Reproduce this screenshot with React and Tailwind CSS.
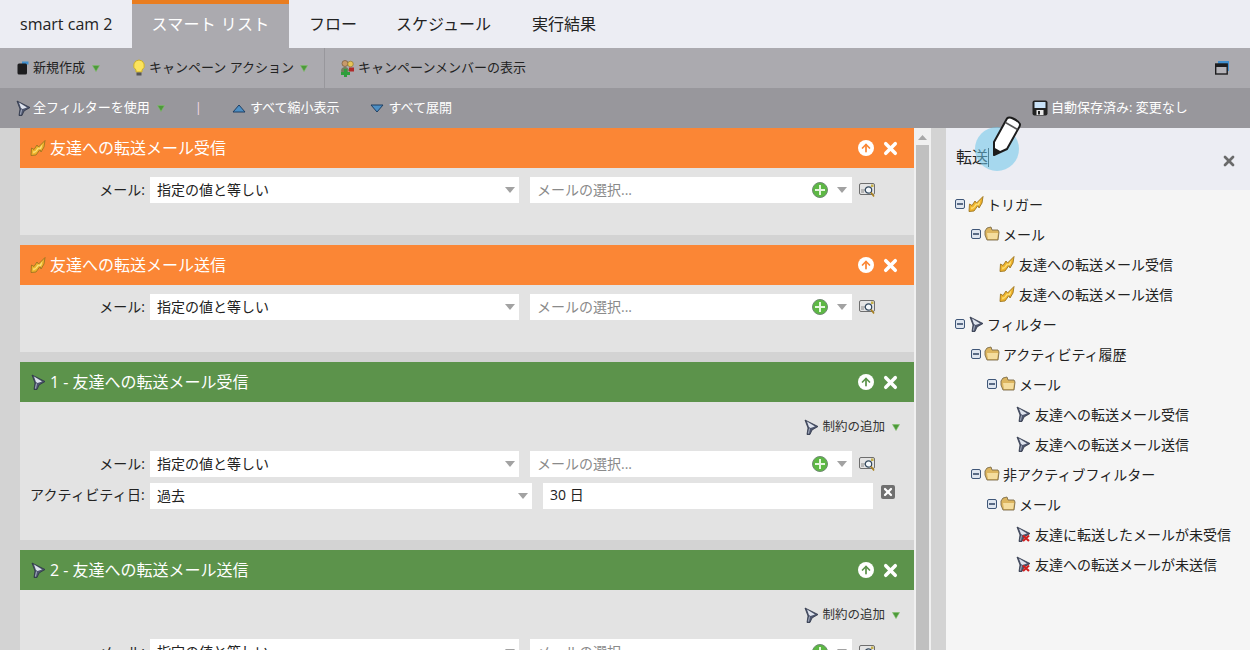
import { ArrowUp, X } from 'lucide-react';

const FONT = 'font-["Open_Sans","Noto_Sans_CJK_JP",sans-serif]';

function Tri({ className = '' }) {
  return (
    <svg viewBox="0 0 8 7" className={`w-[8px] h-[7px] shrink-0 ${className}`}>
      <path d="M0.500 0.500h7L4 6.500z" fill="#4d9a3a" stroke="#7fbf6a" strokeWidth="0.600" />
    </svg>
  );
}

function Bolt({ className = '' }) {
  return (
    <svg viewBox="0 0 16 16" className={`w-[16px] h-[16px] shrink-0 ${className}`}>
      <path d="M15 0.500L14 7l-3 5-1-2.500L6 15l-5 0.500L1.500 8 4 9.500 7 5l1.500 2z" fill="#f0b32c" stroke="#9c7520" strokeWidth="0.900" strokeLinejoin="round" />
      <path d="M3 13.500l0.500-2.500 1.500 0.500 3-4 1.500 0.500 3-4-1 4-1.500 2-1-1.500-3 3.500z" fill="#fbe27a" />
    </svg>
  );
}

function Funnel({ className = '', cross = false }) {
  return (
    <svg viewBox="0 0 16 16" className={`w-[16px] h-[16px] shrink-0 ${className}`}>
      <path d="M2 1l13 6.500-6 3.500-2 4.500H4L5 9z" fill="#4e566e" stroke="#2c3346" strokeWidth="0.800" strokeLinejoin="round" />
      <path d="M4 2.500l8 5-4.500 1.500L6 8z" fill="#dfe4ee" />
      <path d="M6.500 9.500L5.500 14.500" stroke="#aab2c4" strokeWidth="1" />
      {cross && <path d="M8 9.500l6 5.500M14 9.500l-6 5.500" stroke="#d01f1f" strokeWidth="2.200" />}
    </svg>
  );
}

function Folder() {
  return (
    <svg viewBox="0 0 16 16" className="w-[16px] h-[16px] shrink-0">
      <path d="M1 5l2-3 4-1 1 3h6l1 2-1 8H3L1 9z" fill="#dcb55f" stroke="#7d6c48" strokeWidth="0.900" strokeLinejoin="round" />
      <path d="M3 7h11l-1 6H4z" fill="#f5dd9e" />
    </svg>
  );
}

function Toggle() {
  return (
    <span className="w-[10px] h-[10px] shrink-0 rounded-[2px] border border-[#3f5678] bg-[#dfe6f0] flex items-center justify-center">
      <span className="w-[6px] h-[2px] bg-[#5a6b85]" />
    </span>
  );
}

function Plus() {
  return (
    <span className="w-[16px] h-[16px] shrink-0 rounded-full bg-[#5db844] border border-[#6f8a72] flex items-center justify-center relative">
      <span className="absolute w-[10px] h-[2px] bg-[#e6f6df]" />
      <span className="absolute w-[2px] h-[10px] bg-[#e6f6df]" />
    </span>
  );
}

function Mag() {
  return (
    <svg viewBox="0 0 17 15" className="w-[17px] h-[15px] shrink-0">
      <rect x="0.500" y="0.500" width="15" height="11" rx="1.500" fill="#e4e4e4" stroke="#6e6e6e" />
      <path d="M2 7h4M2 9h3" stroke="#8a8a8a" />
      <circle cx="9.500" cy="7" r="3.200" fill="#f4f8fb" stroke="#34495e" strokeWidth="1.200" />
      <path d="M12 9.500l3 4" stroke="#a9801e" strokeWidth="1.600" />
      <rect x="12" y="1.500" width="2.500" height="2.500" fill="#c5b04a" />
    </svg>
  );
}

function Select({ text, width, placeholder = false, extra = false }) {
  return (
    <div className={`h-[26px] ${width} bg-white flex items-center pl-[7px] ${extra ? 'pr-[5px]' : 'pr-[4px]'} shrink-0`}>
      <span className={`flex-1 pb-[2px] ${placeholder ? 'text-[#8a8a8a]' : 'text-[#222]'}`}>{text}</span>
      {extra && <Plus />}
      <svg viewBox="0 0 10 6" className={`w-[10px] h-[6px] ${extra ? 'ml-[9px]' : ''}`}>
        <path d="M0 0h10L5 6z" fill="#a2a2a2" />
      </svg>
    </div>
  );
}

function MailRow() {
  return (
    <div className="flex items-center">
      <div className="w-[125px] text-right text-[#222] mr-[5px] pb-[2px]">メール:</div>
      <Select text="指定の値と等しい" width="w-[369px]" />
      <div className="w-[11px]" />
      <Select text="メールの選択..." width="w-[322px]" placeholder extra />
      <div className="ml-[7px]"><Mag /></div>
    </div>
  );
}

function Card({ title, color, icon, filter = false, gapless = false }) {
  return (
    <div className={gapless ? '' : 'mb-[10px]'}>
      <div className={`h-[40px] ${color} flex items-center text-white text-[16px] pl-[10px] pr-[14px]`}>
        <span className="w-[20px] flex">{icon}</span>
        <span className="flex-1">{title}</span>
        <span className="w-[16px] h-[16px] rounded-full bg-white flex items-center justify-center">
          <ArrowUp size={12} strokeWidth={3.500} className={color === 'bg-[#fb8635]' ? 'text-[#fb8635]' : 'text-[#5c934b]'} />
        </span>
        <X size={19} strokeWidth={4.500} className="text-white ml-[7px]" />
      </div>
      {filter ? (
        <div className="h-[138px] bg-[#e3e3e3] text-[14px] pt-[13px]">
          <div className="h-[24px] flex items-center justify-end pr-[14px] text-[12.500px] text-[#333]">
            <Funnel className="mr-[3px]" />
            制約の追加
            <Tri className="ml-[7px]" />
          </div>
          <div className="mt-[12px]"><MailRow /></div>
          <div className="flex items-start mt-[6px]">
            <div className="w-[125px] text-right text-[#222] mr-[5px] leading-[24px] whitespace-nowrap tracking-[0.2px]">アクティビティ日:</div>
            <Select text="過去" width="w-[382px]" />
            <div className="w-[11px]" />
            <div className="w-[330px] h-[26px] bg-white pl-[7px] leading-[24px] text-[#222]">30 日</div>
            <span className="ml-[8px] mt-[2px] w-[14px] h-[14px] rounded-[2px] bg-[#707070] flex items-center justify-center">
              <X size={12} strokeWidth={4.500} className="text-white" />
            </span>
          </div>
        </div>
      ) : (
        <div className="h-[67px] bg-[#e3e3e3] text-[14px] pt-[9px]">
          <MailRow />
        </div>
      )}
    </div>
  );
}

function TreeRow({ pad, icon, text, toggle = true }) {
  return (
    <div className={`h-[30px] flex items-center ${pad}`}>
      {toggle && <Toggle />}
      <span className={toggle ? 'ml-[3px]' : ''}>{icon}</span>
      <span className={`${toggle ? 'ml-[3px]' : 'ml-[4px]'} text-[#222]`}>{text}</span>
    </div>
  );
}

export default function App() {
  return (
    <div className={`w-[1250px] h-[650px] overflow-hidden relative flex flex-col ${FONT} bg-[#d3d3d3]`}>
      {/* tabs */}
      <div className="h-[48px] bg-[#ecedf3] flex items-stretch text-[16px] text-[#222]">
        <div className="w-[132px] pl-[20px] flex items-center">smart cam 2</div>
        <div className="w-[157px] bg-[#abaaaf] border-t-4 border-[#e97d1f] text-white flex items-center justify-center pb-[4px] tracking-[0.3px]">スマート リスト</div>
        <div className="pl-[20px] flex items-center">フロー</div>
        <div className="pl-[39px] flex items-center">スケジュール</div>
        <div className="pl-[41px] flex items-center">実行結果</div>
      </div>

      {/* toolbar */}
      <div className="h-[40px] bg-[#abaaaf] flex items-center text-[13px] text-[#222] pl-[17px] pr-[21px]">
        <svg viewBox="0 0 12 14" className="w-[12px] h-[14px] mr-[4px] shrink-0">
          <rect x="5" y="0.500" width="6.500" height="3" fill="#3f8fd0" />
          <rect x="0.500" y="2.500" width="9.500" height="11" rx="1.500" fill="#1d1d1f" />
        </svg>
        新規作成
        <Tri className="ml-[7px]" />
        <svg viewBox="0 0 14 18" className="w-[14px] h-[18px] ml-[32px] mr-[3px] shrink-0">
          <path d="M7 1a5.500 5.500 0 0 0-3 10v2h6v-2A5.500 5.500 0 0 0 7 1z" fill="#fbe35c" stroke="#c9ad2c" />
          <rect x="4.500" y="13.500" width="5" height="3" fill="#555" />
        </svg>
        キャンペーン アクション
        <Tri className="ml-[6px]" />
        <div className="w-px h-[40px] bg-[#98979c] ml-[16px] mr-[14px]" />
        <svg viewBox="0 0 17 18" className="w-[17px] h-[18px] mr-[2px] shrink-0">
          <circle cx="6" cy="4.500" r="3" fill="#c79a6a" stroke="#6b4b2c" strokeWidth="0.600" />
          <circle cx="11.500" cy="5" r="2.800" fill="#e7c45a" stroke="#8a6f22" strokeWidth="0.600" />
          <path d="M2 12c0-3 2-4 4-4s3 1 4 3l-2 4H3z" fill="#6f7f5a" />
          <path d="M10 8.500h5v4h-5z" fill="#b02a2a" />
          <path d="M2 13h3v-3h3v3h3v3H8v2H5v-2H2z" fill="#2f9e3c" />
        </svg>
        キャンペーンメンバーの表示
        <svg viewBox="0 0 14 14" className="w-[14px] h-[14px] ml-auto shrink-0">
          <path d="M3 0.500h10.500V10" fill="none" stroke="#3f8fd0" strokeWidth="1.500" />
          <path d="M3 1h10v3H3z" fill="#3f8fd0" />
          <rect x="0.700" y="3" width="11.500" height="10" fill="#b4b3b8" stroke="#1d1d1f" strokeWidth="1.400" />
          <rect x="0.700" y="3" width="11.500" height="3" fill="#1d1d1f" />
        </svg>
      </div>

      {/* filter toolbar */}
      <div className="h-[40px] bg-[#98979c] flex items-center text-[13px] text-white pl-[15px]">
        <Funnel className="mr-[2px]" />
        全フィルターを使用
        <Tri className="ml-[7px]" />
        <span className="ml-[30px] text-[#f7d9e6]">|</span>
        <svg viewBox="0 0 14 9" className="w-[14px] h-[9px] ml-[30px] mr-[4px] shrink-0">
          <path d="M7 1l6 7H1z" fill="#4d8fc4" stroke="#1f3f63" />
        </svg>
        すべて縮小表示
        <svg viewBox="0 0 14 9" className="w-[14px] h-[9px] ml-[31px] mr-[4px] shrink-0">
          <path d="M1 1h12L7 8z" fill="#4d8fc4" stroke="#1f3f63" />
        </svg>
        すべて展開
        <svg viewBox="0 0 16 16" className="w-[16px] h-[16px] ml-[580px] mr-[3px] shrink-0">
          <rect x="0.500" y="0.500" width="15" height="15" rx="2" fill="#222" />
          <rect x="2.500" y="2" width="11" height="6" fill="#c9e2f7" />
          <rect x="4.500" y="10" width="7" height="5" fill="#e8e8e8" />
          <rect x="6" y="11" width="2" height="3.500" fill="#222" />
        </svg>
        自動保存済み: 変更なし
      </div>

      {/* main */}
      <div className="flex-1 flex overflow-hidden">
        <div className="w-[914px] pl-[20px] shrink-0">
          <Card title="友達への転送メール受信" color="bg-[#fb8635]" icon={<Bolt />} />
          <Card title="友達への転送メール送信" color="bg-[#fb8635]" icon={<Bolt />} />
          <Card title="1 - 友達への転送メール受信" color="bg-[#5c934b]" icon={<Funnel />} filter />
          <Card title="2 - 友達への転送メール送信" color="bg-[#5c934b]" icon={<Funnel />} filter gapless />
        </div>

        {/* scrollbar */}
        <div className="w-[17px] bg-[#f0f0f0] shrink-0 flex flex-col items-center">
          <svg viewBox="0 0 9 5" className="w-[9px] h-[5px] mt-[7px]">
            <path d="M4.500 0L9 5H0z" fill="#a8a8a8" />
          </svg>
          <div className="w-[13px] flex-1 bg-[#c0c0c0] mt-[5px]" />
        </div>
        <div className="w-[15px] shrink-0" />

        {/* right panel */}
        <div className="flex-1 bg-[#f5f5f5] text-[14px]">
          <div className="h-[62px] bg-[#ecedf3] flex items-center pl-[10px] pr-[13px] pb-[4px]">
            <span className="text-[16px] text-[#222]">転送</span>
            <span className="w-px h-[19px] bg-[#333]" />
            <X size={16} strokeWidth={4} className="text-[#6a6a6a] ml-auto mt-[8px]" />
          </div>
          <div className="-mt-px">
            <TreeRow pad="pl-[9px]" icon={<Bolt />} text="トリガー" />
            <TreeRow pad="pl-[25px]" icon={<Folder />} text="メール" />
            <TreeRow pad="pl-[53px]" toggle={false} icon={<Bolt />} text="友達への転送メール受信" />
            <TreeRow pad="pl-[53px]" toggle={false} icon={<Bolt />} text="友達への転送メール送信" />
            <TreeRow pad="pl-[9px]" icon={<Funnel />} text="フィルター" />
            <TreeRow pad="pl-[25px]" icon={<Folder />} text="アクティビティ履歴" />
            <TreeRow pad="pl-[41px]" icon={<Folder />} text="メール" />
            <TreeRow pad="pl-[69px]" toggle={false} icon={<Funnel />} text="友達への転送メール受信" />
            <TreeRow pad="pl-[69px]" toggle={false} icon={<Funnel />} text="友達への転送メール送信" />
            <TreeRow pad="pl-[25px]" icon={<Folder />} text="非アクティブフィルター" />
            <TreeRow pad="pl-[41px]" icon={<Folder />} text="メール" />
            <TreeRow pad="pl-[69px]" toggle={false} icon={<Funnel cross />} text="友達に転送したメールが未受信" />
            <TreeRow pad="pl-[69px]" toggle={false} icon={<Funnel cross />} text="友達への転送メールが未送信" />
          </div>
        </div>
      </div>

      {/* pen cursor highlight over the search box */}
      <div className="absolute left-[975px] top-[127px] w-[44px] h-[44px] rounded-full bg-[#6ec6ea]/55" />
      <svg viewBox="0 0 32 42" className="absolute left-[990px] top-[115px] w-[32px] h-[42px]">
        <path d="M4 27L17 3.500c1.500-1.500 3-1.500 6 0s6 3 7 5.500c0 1 0 1.500-0.500 2.500L17 34 4 40z" fill="#fff" stroke="#1c1c1c" strokeWidth="2" strokeLinejoin="round" />
        <path d="M4 40v-7.500L11 36.500z" fill="#1c1c1c" />
        <path d="M15.500 7.500l12 7" stroke="#555" strokeWidth="1.600" />
      </svg>
    </div>
  );
}
